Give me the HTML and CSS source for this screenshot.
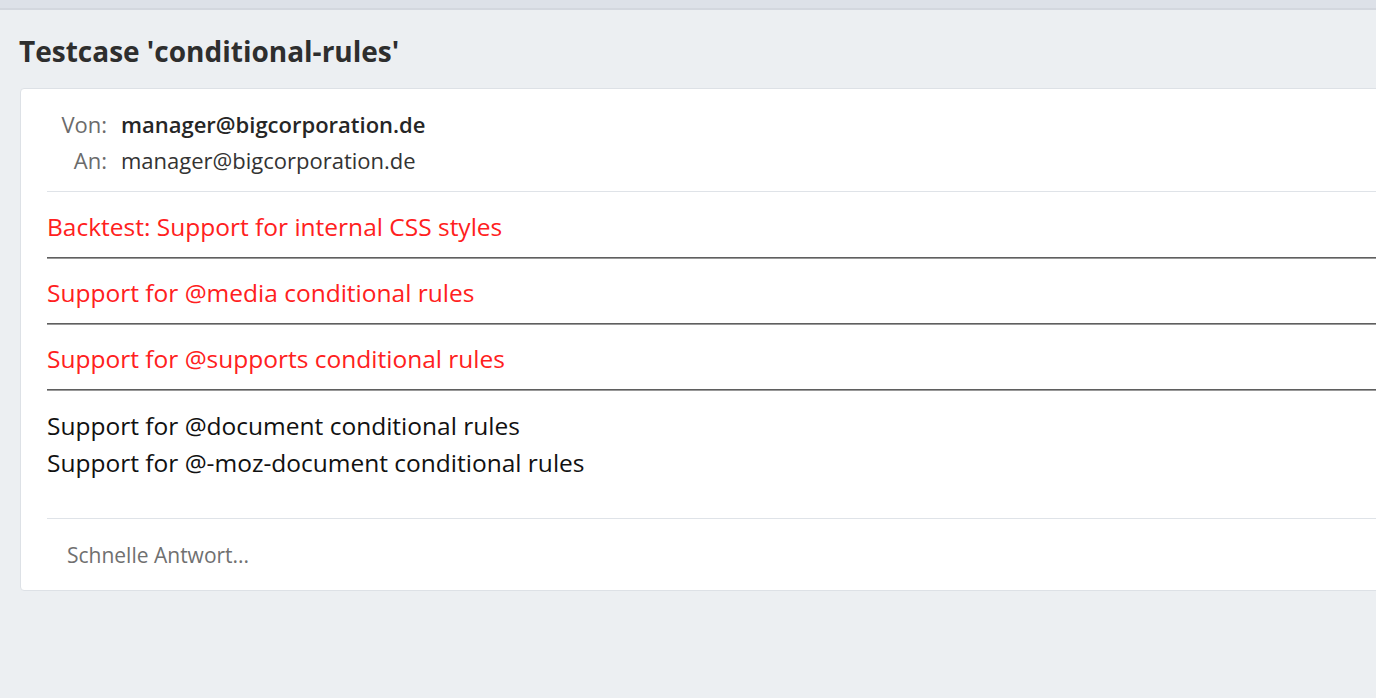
FILE: index.html
```html
<!DOCTYPE html>
<html lang="de">
<head>
<meta charset="utf-8">
<title>Testcase 'conditional-rules'</title>
<link rel="stylesheet" href="styles.css">
</head>
<body>
<div class="topbar"></div>
<h1 class="title">Testcase 'conditional-rules'</h1>
<div class="card">
  <div class="headers">
    <span class="label">Von:</span><span class="value from">manager@bigcorporation.de</span>
    <span class="label">An:</span><span class="value">manager@bigcorporation.de</span>
  </div>
  <div class="body">
    <p class="line red">Backtest: Support for internal CSS styles</p>
    <hr class="rule">
    <p class="line red">Support for @media conditional rules</p>
    <hr class="rule">
    <p class="line red">Support for @supports conditional rules</p>
    <hr class="rule">
    <p class="line">Support for @document conditional rules</p>
    <p class="line">Support for @-moz-document conditional rules</p>
  </div>
  <div class="reply">Schnelle Antwort...</div>
</div>
</body>
</html>
```

FILE: styles.css
```css
html, body {
  margin: 0;
  padding: 0;
}
body {
  background: #eceff2;
  font-family: "Open Sans", "Noto Sans", sans-serif;
  color: #222;
  overflow: hidden;
  height: 698px;
}
.topbar {
  height: 8px;
  background: #dde1e8;
  border-bottom: 2px solid #d3d7de;
}
.title {
  margin: 24px 0 20px 19px;
  font-size: 28px;
  line-height: 34px;
  font-weight: 700;
  color: #2e2e2e;
}
.card {
  margin-left: 20px;
  margin-right: -20px;
  background: #fff;
  border: 1px solid #dde1e6;
  border-radius: 4px;
  padding: 17px 0 22px 26px;
}
.headers {
  display: grid;
  grid-template-columns: 60px auto;
  column-gap: 14px;
  justify-content: start;
  font-size: 22px;
  line-height: 36px;
  padding-bottom: 13px;
  border-bottom: 1px solid #dfe3e8;
}
.label {
  text-align: right;
  color: #6b6b6b;
}
.value {
  color: #333;
}
.value.from {
  font-weight: 600;
  color: #262626;
}
.body {
  padding-top: 16px;
  padding-bottom: 37px;
  border-bottom: 1px solid #dfe3e8;
  font-size: 24.5px;
}
.line {
  margin: 0;
  line-height: 37px;
  color: #111;
}
.line.red {
  color: #ff2020;
}
.rule {
  margin: 12px 0 15px 0;
  border: 0;
  border-top: 1px solid #5f5f5f;
  border-bottom: 1px solid #999;
  height: 0;
}
.rule:last-of-type {
  margin-bottom: 16px;
}
.reply {
  padding: 23px 0 0 20px;
  font-size: 21px;
  line-height: 26px;
  color: #707070;
}
```
